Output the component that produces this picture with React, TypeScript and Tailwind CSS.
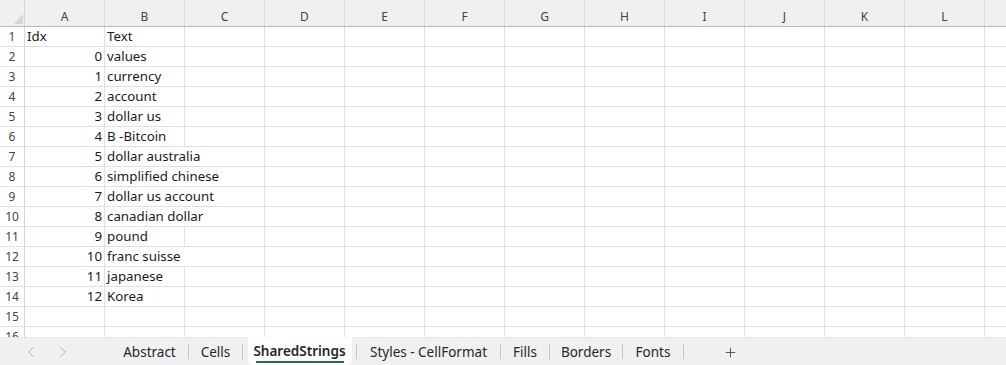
import { ChevronLeft, ChevronRight, Plus } from 'lucide-react'

const columns = ['A', 'B', 'C', 'D', 'E', 'F', 'G', 'H', 'I', 'J', 'K', 'L', 'M']

const rows: { a: string; b: string }[] = [
  { a: 'Idx', b: 'Text' },
  { a: '0', b: 'values' },
  { a: '1', b: 'currency' },
  { a: '2', b: 'account' },
  { a: '3', b: 'dollar us' },
  { a: '4', b: 'B -Bitcoin' },
  { a: '5', b: 'dollar australia' },
  { a: '6', b: 'simplified chinese' },
  { a: '7', b: 'dollar us account' },
  { a: '8', b: 'canadian dollar' },
  { a: '9', b: 'pound' },
  { a: '10', b: 'franc suisse' },
  { a: '11', b: 'japanese' },
  { a: '12', b: 'Korea' },
  { a: '', b: '' },
  { a: '', b: '' }
]

const tabs = [
  { name: 'Abstract', w: 'w-[77px]' },
  { name: 'Cells', w: 'w-[53px]' },
  { name: 'SharedStrings', w: 'w-[113px]' },
  { name: 'Styles - CellFormat', w: 'w-[143px]' },
  { name: 'Fills', w: 'w-[48px]' },
  { name: 'Borders', w: 'w-[72px]' },
  { name: 'Fonts', w: 'w-[60px]' }
]

export default function App() {
  return (
    <div className="w-[1006px] h-[365px] flex flex-col overflow-hidden bg-white text-[#1a1a1a]" style={{ fontFamily: '"Noto Sans", "Open Sans", sans-serif' }}>
      <div className="h-[337px] overflow-hidden flex flex-col">
        {/* column headers */}
        <div className="flex h-[27px] shrink-0 bg-[#f0f0f0] border-b border-[#b8b8b8]">
          <div className="w-[25px] shrink-0 relative border-r border-[#d4d4d4]">
            <div className="absolute right-[1px] bottom-[2px] w-0 h-0 border-l-[9px] border-l-transparent border-b-[10px] border-b-[#d6d6d6]" />
          </div>
          {columns.map((c) => (
            <div key={c} className="w-[80px] shrink-0 flex items-center justify-center pt-[7px] text-[12px] text-[#444] border-r border-[#dcdcdc]">
              {c}
            </div>
          ))}
        </div>
        {/* rows */}
        {rows.map((r, i) => (
          <div key={i} className="flex h-[20px] shrink-0 border-b border-[#e1e1e1]">
            <div className="w-[25px] shrink-0 flex items-center justify-center pt-px text-[12px] text-[#444] border-r border-[#d4d4d4]">
              {i + 1}
            </div>
            <div className={`w-[80px] shrink-0 flex items-center pt-px text-[13.3px] border-r border-[#e1e1e1] px-[2px] ${i === 0 ? 'justify-start' : 'justify-end'}`}>
              {r.a}
            </div>
            <div className={`w-[80px] shrink-0 flex items-center pt-px text-[13.3px] px-[2px] whitespace-nowrap ${r.b.length > 11 ? '' : 'border-r border-[#e1e1e1]'}`}>
              {r.b}
            </div>
            {columns.slice(2).map((c) => (
              <div key={c} className="w-[80px] shrink-0 border-r border-[#e1e1e1]" />
            ))}
          </div>
        ))}
      </div>
      {/* sheet tabs */}
      <div className="h-[28px] shrink-0 flex items-stretch bg-[#f0f0f0] border-t border-[#e6e6e6] text-[13.5px] text-[#262626]">
        <div className="w-[111px] shrink-0 flex items-center pl-[22px] pt-px gap-[14px] text-[#a8a8a8]">
          <ChevronLeft size={18} strokeWidth={1.2} />
          <ChevronRight size={18} strokeWidth={1.2} />
        </div>
        {tabs.map((t) => {
          const active = t.name === 'SharedStrings'
          return (
            <div key={t.name} className="flex items-stretch">
              {active ? (
                <div className={`${t.w} shrink-0 flex items-stretch justify-center`}>
                  <div className="w-[104px] bg-white rounded-b-[6px] flex flex-col items-center justify-center -mt-px">
                    <span className="font-semibold leading-[18px] pt-[2px]">{t.name}</span>
                    <span className="block w-[88px] h-[2px] bg-[#1e7145] mt-[1px]" />
                  </div>
                </div>
              ) : (
                <div className={`${t.w} shrink-0 flex items-center justify-center pt-[2px]`}>{t.name}</div>
              )}
              <div className="w-px my-[6px] bg-[#c8c8c8]" />
            </div>
          )
        })}
        <div className="flex items-center pl-[39px] pt-px text-[#444]">
          <Plus size={15} strokeWidth={1.4} />
        </div>
      </div>
    </div>
  )
}
